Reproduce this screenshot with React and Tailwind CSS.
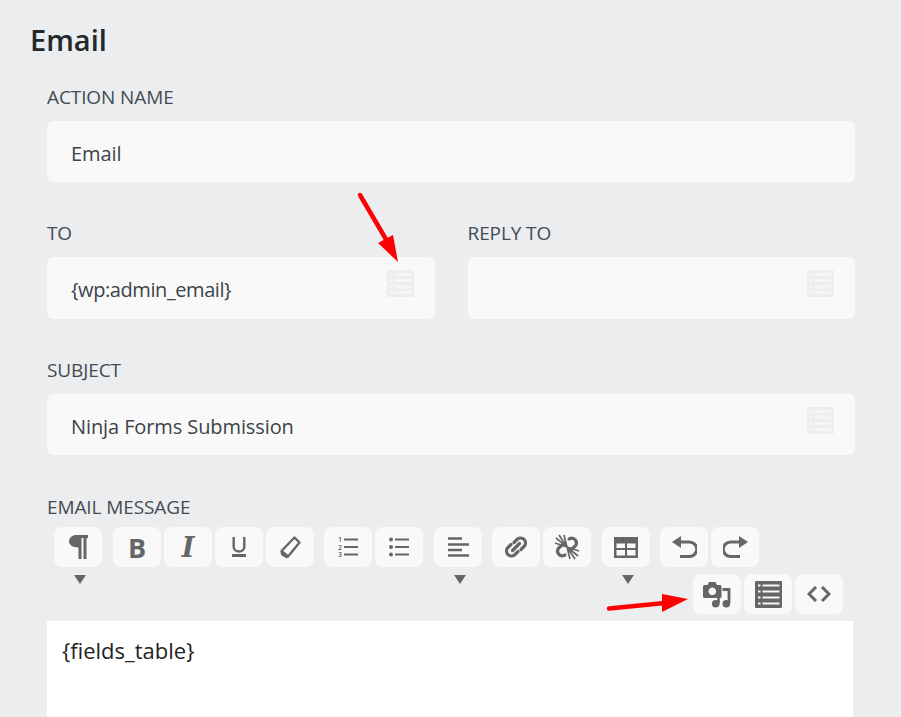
function Lines({ className }) {
  return (
    <svg viewBox="0 0 27 27" className={className}>
      <path
        fill="currentColor"
        fillRule="evenodd"
        d="M1 0h25a1 1 0 0 1 1 1v25a1 1 0 0 1-1 1H1a1 1 0 0 1-1-1V1a1 1 0 0 1 1-1z M3 3.500v2h2.500v-2z M7.500 3.500v2h17v-2z M3 9.500v2h2.500v-2z M7.500 9.500v2h17v-2z M3 15.500v2h2.500v-2z M7.500 15.500v2h17v-2z M3 21.500v2h2.500v-2z M7.500 21.500v2h17v-2z"
      />
    </svg>
  );
}

function Btn({ children, caret }) {
  return (
    <div className="relative w-12 h-10 rounded-lg bg-[#f9f9f9] flex items-center justify-center text-[#666]">
      {children}
      {caret && (
        <svg viewBox="0 0 12 9" className="absolute left-[20px] top-12 w-3 h-[9px] text-[#666]">
          <path fill="currentColor" d="M0 0h12L6 9z" />
        </svg>
      )}
    </div>
  );
}

function Group({ children, className = "" }) {
  return <div className={`flex gap-[3px] ${className}`}>{children}</div>;
}

function Field({ label, value, icon, className = "", boxClass = "h-[61px]", valueClass = "tracking-[-0.1px]" }) {
  return (
    <div className={className}>
      <div className="text-[19px] leading-[25px] text-[#444b52] mb-[11px] tracking-[-0.1px]">{label}</div>
      <div className={`relative rounded-md bg-[#f9f9f9] pl-6 pt-[4px] flex items-center text-[20px] text-[#3c434a] ${boxClass} ${valueClass}`}>
        {value}
        {icon && <Lines className="absolute right-[21px] top-[13px] w-[27px] h-[27px] text-[#eeeeee]" />}
      </div>
    </div>
  );
}

export default function App() {
  return (
    <div className="relative w-[901px] h-[717px] overflow-hidden bg-[#ecedef] font-['Open_Sans',sans-serif]">
      <h1 className="pl-[30px] pt-[20px] text-[29px] leading-10 font-semibold text-[#23282d]">Email</h1>
      <div className="pl-[47px] pr-[46px] pt-[25px]">
        <Field label="ACTION NAME" value="Email" />
        <div className="flex gap-[33px] mt-[39px]">
          <Field className="flex-1" boxClass="h-[62px]" valueClass="tracking-[-0.42px]" label="TO" value="{wp:admin_email}" icon />
          <Field className="flex-1" boxClass="h-[62px]" label="REPLY TO" value="" icon />
        </div>
        <Field className="mt-[39px]" label="SUBJECT" value="Ninja Forms Submission" icon />
        <div className="mt-[40px] text-[19px] leading-[25px] text-[#444b52] tracking-[-0.1px]">EMAIL MESSAGE</div>

        <div className="h-[101px] pl-[7px] pt-[7px]">
          <div className="flex">
            <Group>
              <Btn caret>
                <svg viewBox="0 0 19 24" className="w-[19px] h-6">
                  <path fill="currentColor" d="M7.500 0H19v3h-1.500v21h-3V3h-2v21h-3V12.500C3.500 12.500 0 10 0 6.300S3.500 0 7.500 0z" />
                </svg>
              </Btn>
            </Group>
            <Group className="ml-[11px]">
              <Btn>
                <span className="text-[27px] font-bold leading-none text-[#666]">B</span>
              </Btn>
              <Btn>
                <span className="text-[27px] font-bold italic leading-none font-['DejaVu_Serif',serif] text-[#666]">I</span>
              </Btn>
              <Btn>
                <svg viewBox="0 0 14 20" className="w-[14px] h-5">
                  <path fill="none" stroke="currentColor" strokeWidth="2.400" d="M1.700 0v10c0 6 10.600 6 10.600 0V0" />
                  <path fill="currentColor" d="M0 17h14v3H0z" />
                </svg>
              </Btn>
              <Btn>
                <svg viewBox="0 0 21 23" className="w-[21px] h-[23px]">
                  <path fill="none" stroke="currentColor" strokeWidth="2.400" strokeLinejoin="round" d="M14.500 1.500L19.500 6.500 8 20.500 1.500 15z" />
                  <path fill="currentColor" d="M1.500 14.500L8 20.500 7 22.500 1.500 19.500 0.500 17z" />
                </svg>
              </Btn>
            </Group>
            <Group className="ml-[10px]">
              <Btn>
                <svg viewBox="-1 -5 22 30" className="w-[22px] h-[30px] overflow-visible">
                  <path stroke="currentColor" strokeWidth="1.800" d="M6 2.500h14M6 10h14M6 17.500h14" />
                  <text x="0" y="5.300" fontSize="7" fontWeight="600" fill="currentColor" fontFamily="'Open Sans',sans-serif">1</text>
                  <text x="0" y="12.800" fontSize="7" fontWeight="600" fill="currentColor" fontFamily="'Open Sans',sans-serif">2</text>
                  <text x="0" y="20.300" fontSize="7" fontWeight="600" fill="currentColor" fontFamily="'Open Sans',sans-serif">3</text>
                </svg>
              </Btn>
              <Btn>
                <svg viewBox="0 0 20 20" className="w-5 h-5">
                  <path stroke="currentColor" strokeWidth="1.800" d="M6 2.500h14M6 10h14M6 17.500h14" />
                  <circle cx="2" cy="2.500" r="2" fill="currentColor" />
                  <circle cx="2" cy="10" r="2" fill="currentColor" />
                  <circle cx="2" cy="17.500" r="2" fill="currentColor" />
                </svg>
              </Btn>
            </Group>
            <Group className="ml-[11px]">
              <Btn caret>
                <svg viewBox="0 0 21 20" className="w-[21px] h-5">
                  <path stroke="currentColor" strokeWidth="2.400" d="M0 1.500h14M0 7.500h21M0 13h14M0 18.500h21" />
                </svg>
              </Btn>
            </Group>
            <Group className="ml-[10px]">
              <Btn>
                <svg viewBox="0 0 26 26" className="w-[26px] h-[26px]">
                  <g fill="none" stroke="currentColor" strokeWidth="3.200" strokeLinecap="round">
                    <path d="M11 8.500l3.500-3.500a5 5 0 0 1 7 7L18 15.500" />
                    <path d="M15 17.500l-3.500 3.500a5 5 0 0 1-7-7L8 10.500" />
                    <path d="M9.500 16.500l7-7" />
                  </g>
                </svg>
              </Btn>
              <Btn>
                <svg viewBox="0 0 26 26" className="w-[26px] h-[26px]">
                  <g fill="none" stroke="currentColor" strokeWidth="3.200" strokeLinecap="round">
                    <path d="M15 5l1-.6a4.800 4.800 0 0 1 5.600 7.200l-5 4.400" />
                    <path d="M11 21l-1 .6a4.800 4.800 0 0 1-5.600-7.200l5-4.400" />
                  </g>
                  <g stroke="currentColor" strokeWidth="1.700">
                    <path d="M13 13L2 4M13 13L5 1M13 13L10 1M13 13L1 9" />
                    <path d="M13 13L24 22M13 13L21 25M13 13L16 25M13 13L25 17" />
                  </g>
                </svg>
              </Btn>
            </Group>
            <Group className="ml-[11px]">
              <Btn caret>
                <svg viewBox="0 0 24 21" className="w-6 h-[21px]">
                  <path fill="currentColor" fillRule="evenodd" d="M0 0h24v21H0z M2.500 6.500v4.500h8.500V6.500z M13 6.500v4.500h8.500V6.500z M2.500 13v5.500h8.500V13z M13 13v5.500h8.500V13z" />
                </svg>
              </Btn>
            </Group>
            <Group className="ml-[10px]">
              <Btn>
                <svg viewBox="0 0 25 22" className="w-[25px] h-[22px]">
                  <path fill="currentColor" d="M0 6L9 0v12z" />
                  <path fill="none" stroke="currentColor" strokeWidth="3" d="M7 6h10.500a7 7 0 0 1 0 14.500H8" />
                </svg>
              </Btn>
              <Btn>
                <svg viewBox="0 0 25 22" className="w-[25px] h-[22px]">
                  <path fill="currentColor" d="M25 6L16 0v12z" />
                  <path fill="none" stroke="currentColor" strokeWidth="3" d="M18 6H7.500a7 7 0 0 0 0 14.500H17" />
                </svg>
              </Btn>
            </Group>
          </div>
          <div className="flex justify-end gap-[3px] mt-[7px] pr-[12px]">
            <Btn>
              <svg viewBox="0 0 28 27" className="w-7 h-[27px]">
                <path fill="currentColor" fillRule="evenodd" d="M1.500 4H4.500L6 1h6.500L14 4h3a1.500 1.500 0 0 1 1.500 1.500V15.500A1.500 1.500 0 0 1 17 17H1.500A1.500 1.500 0 0 1 0 15.500V5.500A1.500 1.500 0 0 1 1.500 4z M9.300 6.500a3.800 3.800 0 1 0 .01 0z" />
                <path fill="none" stroke="currentColor" strokeWidth="2.800" d="M19.500 8.500h6.500v14" />
                <path fill="none" stroke="currentColor" strokeWidth="2.600" d="M15.500 16.500v6" />
                <circle cx="12.700" cy="22.800" r="3.800" fill="currentColor" />
                <circle cx="23.300" cy="22.800" r="3.800" fill="currentColor" />
              </svg>
            </Btn>
            <Btn>
              <Lines className="w-[27px] h-[27px] text-[#666]" />
            </Btn>
            <Btn>
              <svg viewBox="0 0 24 16" className="w-6 h-4">
                <path fill="none" stroke="currentColor" strokeWidth="3" d="M9 1L2 8l7 7M15 1l7 7-7 7" />
              </svg>
            </Btn>
          </div>
        </div>

        <div className="w-[806px] h-[200px] bg-white pl-[15px] pt-[14px] text-[22px] leading-[30px] text-[#222]">{"{fields_table}"}</div>
      </div>

      <svg viewBox="0 0 901 717" className="absolute inset-0 w-[901px] h-[717px] pointer-events-none">
        <path stroke="#ff0000" strokeWidth="4.500" strokeLinecap="round" d="M360 195L387 241" />
        <path fill="#ff0000" d="M378 243L393 235L398 262z" />
        <path stroke="#ff0000" strokeWidth="4.500" strokeLinecap="round" d="M609 608.500L665 603" />
        <path fill="#ff0000" d="M662 594L688 599L662 612z" />
      </svg>
    </div>
  );
}
